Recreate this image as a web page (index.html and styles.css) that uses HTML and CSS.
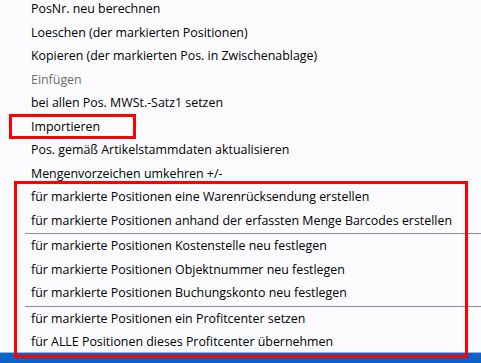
FILE: index.html
```html
<html>

<head>
    <meta charset="UTF-8" />
    <title>Kontextmenü Positionen</title>
    <link rel="stylesheet" href="styles.css">
</head>

<body>
    <div class="menu">
        <div class="item">PosNr. neu berechnen</div>
        <div class="item">Loeschen (der markierten Positionen)</div>
        <div class="item">Kopieren (der markierten Pos. in Zwischenablage)</div>
        <div class="item disabled">Einfügen</div>
        <div class="item">bei allen Pos. MWSt.-Satz1 setzen</div>
        <div class="item">Importieren</div>
        <div class="item">Pos. gemäß Artikelstammdaten aktualisieren</div>
        <div class="item">Mengenvorzeichen umkehren +/-</div>
        <div class="item">für markierte Positionen eine Warenrücksendung erstellen</div>
        <div class="item">für markierte Positionen anhand der erfassten Menge Barcodes erstellen</div>
        <div class="sep"></div>
        <div class="item">für markierte Positionen Kostenstelle neu festlegen</div>
        <div class="item">für markierte Positionen Objektnummer neu festlegen</div>
        <div class="item">für markierte Positionen Buchungskonto neu festlegen</div>
        <div class="sep"></div>
        <div class="item">für markierte Positionen ein Profitcenter setzen</div>
        <div class="item">für ALLE Positionen dieses Profitcenter übernehmen</div>
    </div>
    <div class="taskbar"></div>

    <!-- rote Markierungen aus dem Screenshot -->
    <div class="mark mark-import"></div>
    <div class="mark mark-group"></div>
</body>

</html>
```

FILE: styles.css
```css
body {
    margin: 0;
    padding: 0;
    width: 481px;
    height: 363px;
    overflow: hidden;
    position: relative;
    background-color: #fbfbfe;
    font-family: 'Open Sans', sans-serif;
    font-size: 12.4px;
    color: #000;
}

.menu {
    margin-top: -3px;
    background-color: #fbfbfe;
}

.item {
    height: 23.5px;
    line-height: 23.5px;
    padding-left: 31px;
    white-space: nowrap;
}

.disabled {
    color: #6d6d6d;
}

.sep {
    height: 1px;
    margin: 1px 0 0 25px;
    background-color: #8c8aa6;
}

.taskbar {
    position: absolute;
    left: 0;
    right: 0;
    top: 352px;
    height: 11px;
    background-color: #0b63c9;
    border-top: 1px solid #8fb6e6;
}

.mark {
    position: absolute;
    border: 3px solid #ff0000;
}

.mark-import {
    left: 9px;
    top: 114px;
    width: 121px;
    height: 19px;
}

.mark-group {
    left: 14px;
    top: 181px;
    width: 448px;
    height: 171px;
}
```
